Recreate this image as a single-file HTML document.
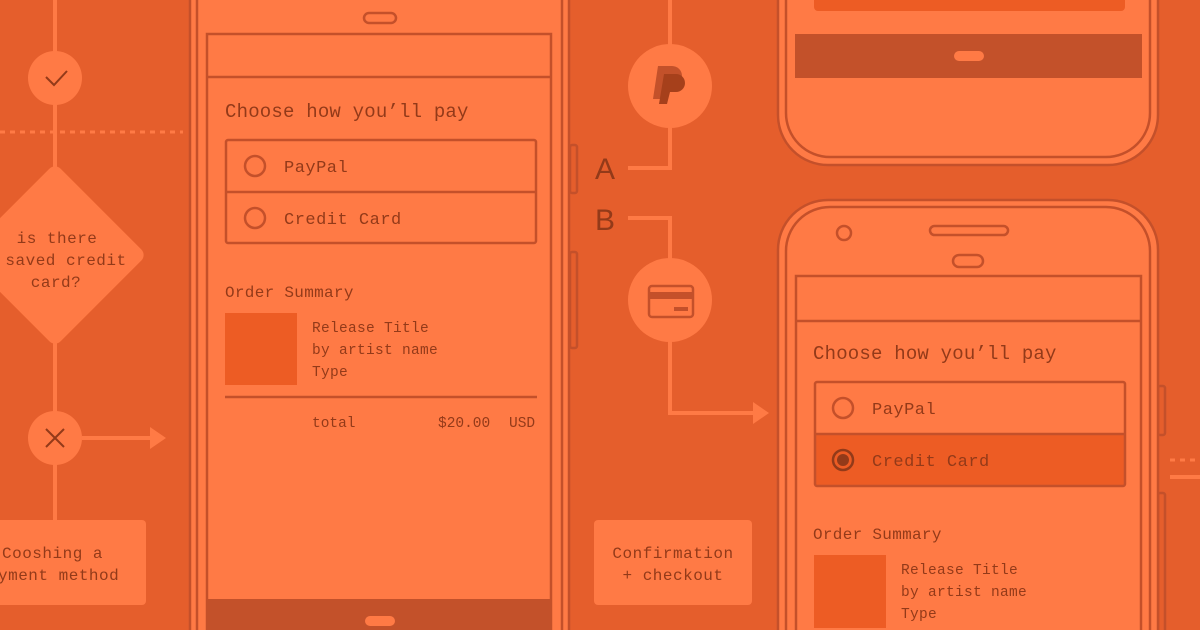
<!DOCTYPE html>
<html><head><meta charset="utf-8"><style>
html,body{margin:0;padding:0;background:#E55E2C;width:1200px;height:630px;overflow:hidden}
svg{display:block;overflow:hidden}
text{font-family:"Liberation Mono","DejaVu Sans Mono",monospace;fill:#933A19}
</style></head><body>
<svg width="1200" height="630" viewBox="0 0 1200 630" xmlns="http://www.w3.org/2000/svg">
<rect width="1200" height="630" fill="#E55E2C"/>
<!-- left flow -->
<g stroke="#FF7A45" stroke-width="4" fill="none">
<line x1="55" y1="0" x2="55" y2="520"/>
<line x1="0" y1="132" x2="183" y2="132" stroke-dasharray="5 5" stroke-width="3"/>
<line x1="82" y1="438" x2="152" y2="438"/>
</g>
<polygon points="150,427 166,438 150,449" fill="#FF7A45"/>
<circle cx="55" cy="78" r="27" fill="#FF7A45"/>
<path d="M46 77 L54 85 L67 71" stroke="#933A19" stroke-width="2" fill="none"/>
<rect x="-10" y="190" width="130" height="130" rx="8" transform="rotate(45 55 255)" fill="#FF7A45"/>
<text x="57" y="243" font-size="16" text-anchor="middle" letter-spacing="0.5">is there</text>
<text x="66" y="265" font-size="16" text-anchor="middle" letter-spacing="0.5">saved credit</text>
<text x="56" y="287" font-size="16" text-anchor="middle" letter-spacing="0.5">card?</text>
<circle cx="55" cy="438" r="27" fill="#FF7A45"/>
<path d="M46 429 L64 447 M64 429 L46 447" stroke="#933A19" stroke-width="2"/>
<rect x="-10" y="520" width="156" height="85" rx="4" fill="#FF7A45"/>
<text x="2" y="558" font-size="16" letter-spacing="0.5">Cooshing a</text>
<text x="-2" y="580" font-size="16" letter-spacing="0.5">yment method</text>

<!-- phone 1 -->
<rect x="570" y="145" width="7" height="48" rx="2" fill="none" stroke="#C4502A" stroke-width="2.5"/>
<rect x="570" y="252" width="7" height="96" rx="2" fill="none" stroke="#C4502A" stroke-width="2.5"/>
<rect x="190" y="-40" width="379" height="720" rx="40" fill="#FF7A45" stroke="#C4502A" stroke-width="2.5"/>
<rect x="197" y="-40" width="365" height="720" rx="36" fill="none" stroke="#C4502A" stroke-width="2.5"/>
<rect x="364" y="13" width="32" height="10" rx="5" fill="none" stroke="#C4502A" stroke-width="2.5"/>
<rect x="207" y="34" width="344" height="620" fill="none" stroke="#C4502A" stroke-width="2.5"/>
<line x1="207" y1="77" x2="551" y2="77" stroke="#C4502A" stroke-width="2.5"/>
<rect x="207" y="599" width="345" height="40" fill="#C3512A"/>
<rect x="365" y="616" width="30" height="10" rx="5" fill="#FF7A45"/>
<text x="225" y="117" font-size="19" letter-spacing="0.2">Choose how you’ll pay</text>
<rect x="226" y="140" width="310" height="103" rx="2" fill="none" stroke="#C4502A" stroke-width="2.5"/>
<line x1="226" y1="192" x2="536" y2="192" stroke="#C4502A" stroke-width="2.5"/>
<circle cx="255" cy="166" r="10" fill="none" stroke="#C4502A" stroke-width="2.5"/>
<circle cx="255" cy="218" r="10" fill="none" stroke="#C4502A" stroke-width="2.5"/>
<text x="284" y="172" font-size="17" letter-spacing="0.5">PayPal</text>
<text x="284" y="224" font-size="17" letter-spacing="0.5">Credit Card</text>
<text x="225" y="297" font-size="16" letter-spacing="0.3">Order Summary</text>
<rect x="225" y="313" width="72" height="72" fill="#ED5C24"/>
<text x="312" y="332" font-size="14.5" letter-spacing="0.3">Release Title</text>
<text x="312" y="354" font-size="14.5" letter-spacing="0.3">by artist name</text>
<text x="312" y="376" font-size="14.5" letter-spacing="0.3">Type</text>
<line x1="225" y1="397" x2="537" y2="397" stroke="#C4502A" stroke-width="2.5"/>
<text x="312" y="427" font-size="14.5">total</text>
<text x="438" y="427" font-size="14.5">$20.00</text>
<text x="509" y="427" font-size="14.5">USD</text>

<!-- middle flow -->
<g stroke="#FF7A45" stroke-width="4" fill="none">
<polyline points="670,0 670,168 628,168"/>
<polyline points="628,218 670,218 670,413 755,413"/>
</g>
<polygon points="753,402 769,413 753,424" fill="#FF7A45"/>
<circle cx="670" cy="86" r="42" fill="#FF7A45"/>
<path d="M658 66 h14 a10 10 0 0 1 0 20 h-7 l-3 13 h-9 z" fill="#C3512A"/>
<path d="M664 74 h12 a9 9 0 0 1 0 18 h-6 l-3 12 h-8 z" fill="#A6401B"/>
<text x="605" y="179" font-size="30" text-anchor="middle" style="font-family:'Liberation Sans',sans-serif">A</text>
<text x="605" y="230" font-size="30" text-anchor="middle" style="font-family:'Liberation Sans',sans-serif">B</text>
<circle cx="670" cy="300" r="42" fill="#FF7A45"/>
<rect x="649" y="286" width="44" height="31" rx="3" fill="none" stroke="#C4502A" stroke-width="2.5"/>
<rect x="649" y="292" width="44" height="7" fill="#C4502A"/>
<rect x="674" y="307" width="14" height="4" fill="#C4502A"/>
<rect x="594" y="520" width="158" height="85" rx="4" fill="#FF7A45"/>
<text x="673" y="558" font-size="16" text-anchor="middle" letter-spacing="0.5">Confirmation</text>
<text x="673" y="580" font-size="16" text-anchor="middle" letter-spacing="0.5">+ checkout</text>

<!-- phone 2 top -->
<rect x="778" y="-300" width="380" height="465" rx="50" fill="#FF7A45" stroke="#C4502A" stroke-width="2.5"/>
<rect x="786" y="-300" width="364" height="457" rx="44" fill="none" stroke="#C4502A" stroke-width="2.5"/>
<rect x="814" y="-10" width="311" height="21" rx="4" fill="#ED5C24"/>
<rect x="795" y="34" width="347" height="44" fill="#C3512A"/>
<rect x="954" y="51" width="30" height="10" rx="5" fill="#FF7A45"/>

<!-- phone 3 -->
<rect x="1158" y="386" width="7" height="49" rx="2" fill="none" stroke="#C4502A" stroke-width="2.5"/>
<rect x="1158" y="493" width="7" height="150" rx="2" fill="none" stroke="#C4502A" stroke-width="2.5"/>
<rect x="778" y="200" width="380" height="500" rx="50" fill="#FF7A45" stroke="#C4502A" stroke-width="2.5"/>
<rect x="786" y="207" width="364" height="490" rx="44" fill="none" stroke="#C4502A" stroke-width="2.5"/>
<circle cx="844" cy="233" r="7" fill="none" stroke="#C4502A" stroke-width="2.5"/>
<rect x="930" y="226" width="78" height="9" rx="4.5" fill="none" stroke="#C4502A" stroke-width="2.5"/>
<rect x="953" y="255" width="30" height="12" rx="6" fill="none" stroke="#C4502A" stroke-width="2.5"/>
<rect x="796" y="276" width="345" height="400" fill="none" stroke="#C4502A" stroke-width="2.5"/>
<line x1="796" y1="321" x2="1141" y2="321" stroke="#C4502A" stroke-width="2.5"/>
<text x="813" y="359" font-size="19" letter-spacing="0.2">Choose how you’ll pay</text>
<rect x="815" y="434" width="310" height="52" fill="#ED5C24"/>
<rect x="815" y="382" width="310" height="104" rx="2" fill="none" stroke="#C4502A" stroke-width="2.5"/>
<line x1="815" y1="434" x2="1125" y2="434" stroke="#C4502A" stroke-width="2.5"/>
<circle cx="843" cy="408" r="10" fill="none" stroke="#C4502A" stroke-width="2.5"/>
<circle cx="843" cy="460" r="10" fill="none" stroke="#933A19" stroke-width="2.5"/>
<circle cx="843" cy="460" r="6" fill="#933A19"/>
<text x="872" y="414" font-size="17" letter-spacing="0.5">PayPal</text>
<text x="872" y="466" font-size="17" letter-spacing="0.5">Credit Card</text>
<text x="813" y="539" font-size="16" letter-spacing="0.3">Order Summary</text>
<rect x="814" y="555" width="72" height="73" fill="#ED5C24"/>
<text x="901" y="574" font-size="14.5" letter-spacing="0.3">Release Title</text>
<text x="901" y="596" font-size="14.5" letter-spacing="0.3">by artist name</text>
<text x="901" y="618" font-size="14.5" letter-spacing="0.3">Type</text>
<line x1="1170" y1="460" x2="1200" y2="460" stroke="#FF7A45" stroke-width="3" stroke-dasharray="5 5"/>
<line x1="1170" y1="477" x2="1200" y2="477" stroke="#FF7A45" stroke-width="4"/>
</svg>
</body></html>
